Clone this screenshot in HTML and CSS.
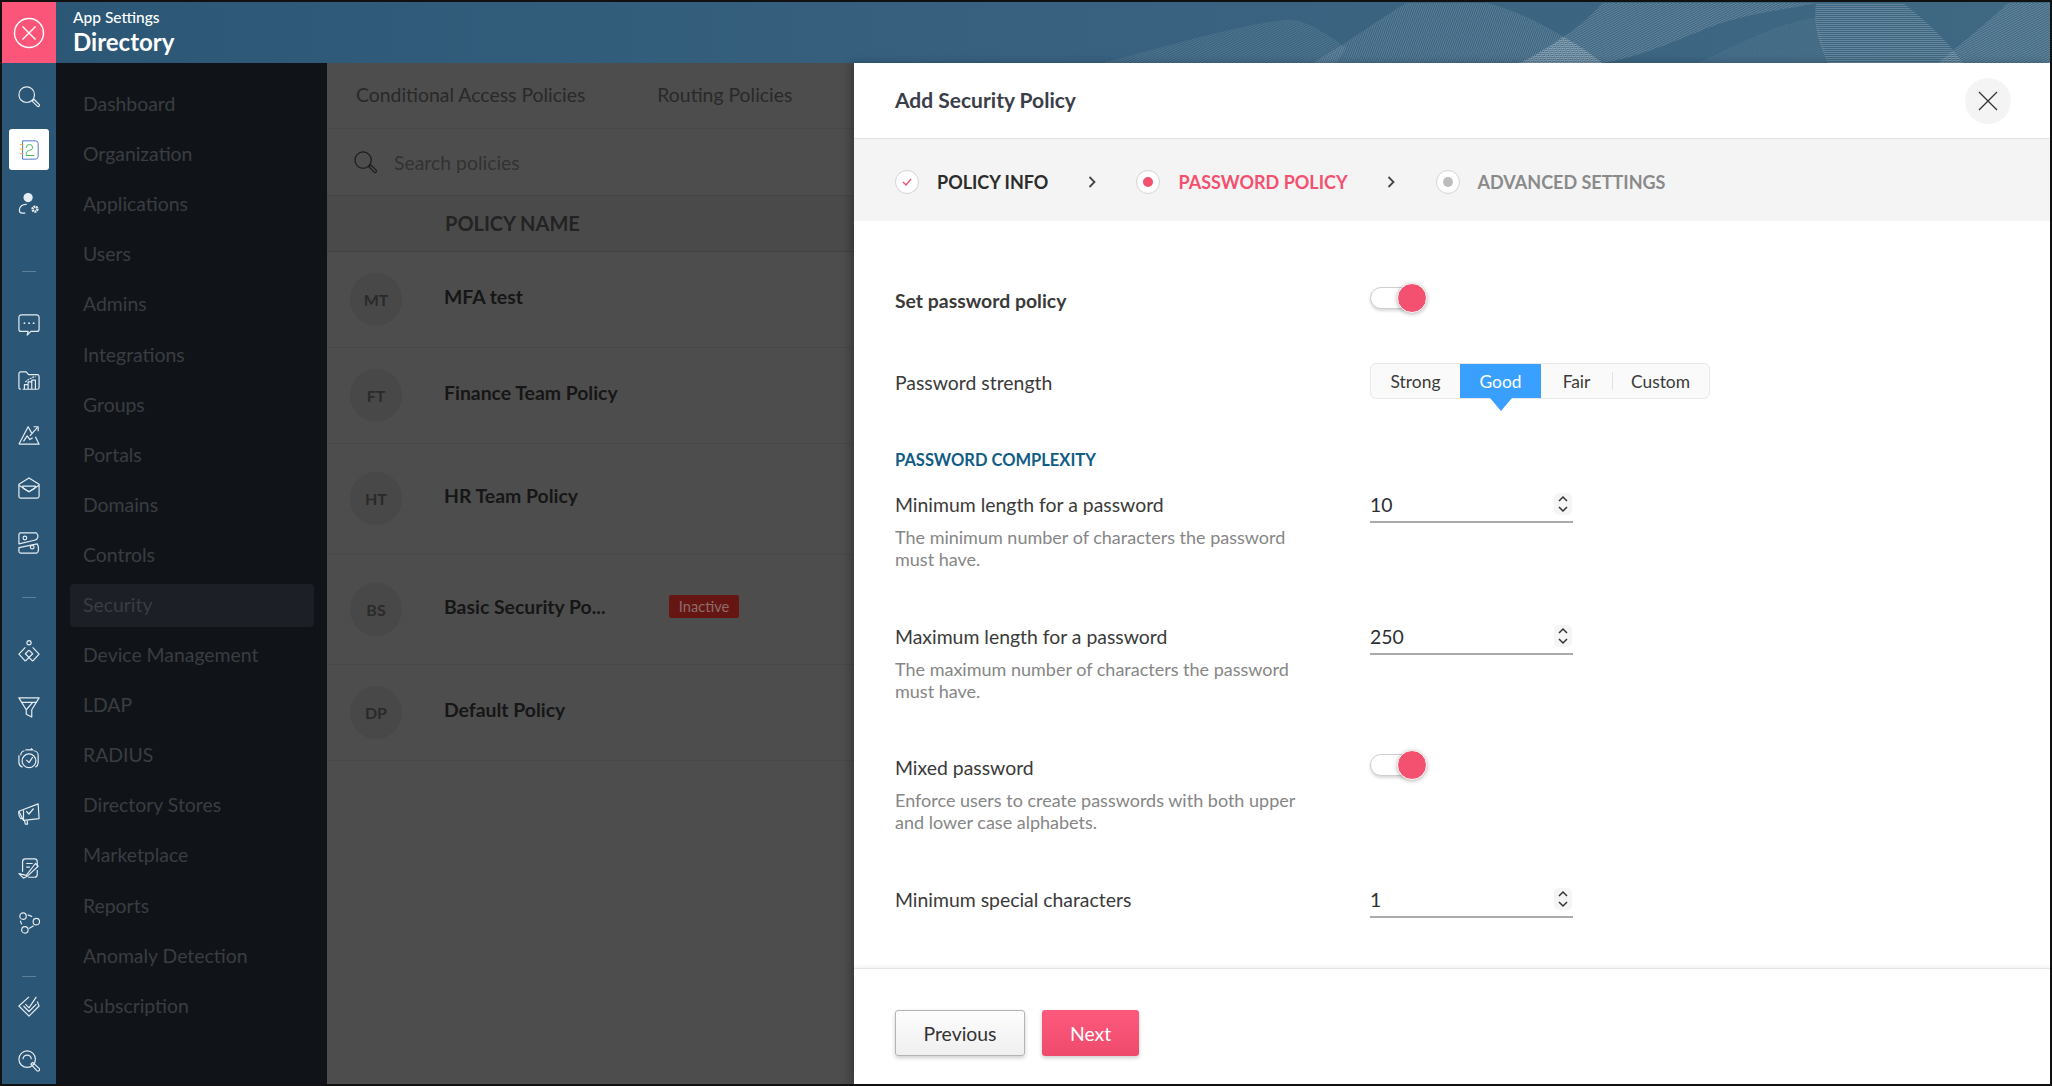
FILE: index.html
```html
<!DOCTYPE html>
<html lang="en">
<head>
    <meta charset="UTF-8">
    <title>Directory - Add Security Policy</title>
    <link rel="stylesheet" href="styles.css">
</head>
<body>
    <header class="topbar">
        <div class="close-tile">
            <svg width="32" height="32" viewBox="0 0 32 32" fill="none" stroke="#fff" stroke-width="1.4"><circle cx="16" cy="16" r="14.5"/><path d="M9.500 9.500l13 13M22.500 9.500l-13 13"/></svg>
        </div>
        <div class="app-title">
            <div class="app-name">App Settings</div>
            <div class="app-section">Directory</div>
        </div>
        <!-- background waves -->
        <svg class="waves" width="1052" height="61" viewBox="0 0 1052 61">
            <defs>
                <pattern id="hatchA" width="2" height="2" patternUnits="userSpaceOnUse" patternTransform="rotate(62)"><rect width="1" height="2" fill="#fff" fill-opacity=".2"/></pattern>
                <pattern id="hatchB" width="2" height="2" patternUnits="userSpaceOnUse" patternTransform="rotate(20)"><rect width="1" height="2" fill="#fff" fill-opacity=".17"/></pattern>
                <pattern id="hatchC" width="2" height="2" patternUnits="userSpaceOnUse" patternTransform="rotate(90)"><rect width="1" height="2" fill="#fff" fill-opacity=".2"/></pattern>
            </defs>
            <path d="M104 61C150 50 230 25 285 18C300 15 320 25 348 46L338 61Z" fill="url(#hatchA)" fill-opacity=".6"/>
            <path d="M315 61C350 40 385 15 408 1L490 1C530 12 570 35 604 61Z" fill="url(#hatchB)"/>
            <path d="M523 61C550 45 585 25 604 1L818 1C790 8 745 10 700 30C670 42 640 55 605 61Z" fill="url(#hatchA)"/>
            <path d="M565 35C580 42 595 52 604 61L520 61C535 55 552 45 565 35Z" fill="url(#hatchC)"/>
            <path d="M818 1L905 1C930 20 950 40 966 62L830 61C820 40 815 20 818 1Z" fill="url(#hatchC)"/>
            <path d="M700 61C745 40 780 20 818 16L830 61Z" fill="url(#hatchA)" fill-opacity=".4"/>
            <path d="M940 61C965 40 990 20 1010 1L1052 1L1052 61Z" fill="url(#hatchA)"/>
        </svg>
    </header>

    <div class="workspace">
        <nav class="rail">
            <a class="rail-icon rail-search"><svg viewBox="0 0 24 24"><circle cx="9.500" cy="9.500" r="8.500"/><path d="M15.500 16.500l2-2 5.500 5.500a1.400 1.400 0 0 1-2 2z"/></svg></a>
            <a class="rail-icon rail-active"><svg viewBox="0 0 24 24"><path d="M5 2h14a3 3 0 0 1 3 3v14a3 3 0 0 1-3 3H5z"/><path class="tick" d="M2 6h4M2 11h4M2 16h4"/><path class="lock" d="M9 9.500a3.500 3.500 0 0 1 7 0c0 3-7 2.500-7 6v2.500h9"/></svg></a>
            <a class="rail-icon rail-people"><svg viewBox="0 0 24 24"><circle cx="11" cy="5" r="4.400" class="solid"/><path d="M9.500 12.500C5 12 1.500 15 1.500 18.500c0 2 1 3.500 3 3.500H8"/><circle cx="18.500" cy="17.500" r="2.600" stroke-width="2.800" stroke-dasharray="1.800 .6"/></svg></a>
            <span class="rail-sep"></span>
            <a class="rail-icon rail-chat"><svg viewBox="0 0 24 24"><path d="M3.500 1h17a2.500 2.500 0 0 1 2.500 2.500v13a2.500 2.500 0 0 1-2.500 2.500H14l-4 4 1-4H3.500A2.500 2.500 0 0 1 1 16.500v-13A2.500 2.500 0 0 1 3.500 1z"/><path d="M7 10h.1M12 10h.1M17 10h.1" stroke-width="2" stroke-linecap="round"/></svg></a>
            <a class="rail-icon rail-folder"><svg viewBox="0 0 24 24"><path d="M3 21a2 2 0 0 1-2-2V4a2 2 0 0 1 2-2h6l2.500 3H21a2 2 0 0 1 2 2v12a2 2 0 0 1-2 2"/><path d="M7 21v-5h4v5M11 21v-8h4v8M15 21v-10h4v10M5 21h16"/><path d="M8 13l4-3 4-2 3-1" stroke-dasharray="2 1"/></svg></a>
            <a class="rail-icon rail-peaks"><svg viewBox="0 0 24 24"><path d="M1 22l10-19 4 7M1 22h22l-4-8"/><path d="M6 19l4-6 3 4 3-2"/><path d="M13 13l8-9M17 3h5v5"/></svg></a>
            <a class="rail-icon rail-mail"><svg viewBox="0 0 24 24"><path d="M1 8L12 1l11 7v13a2 2 0 0 1-2 2H3a2 2 0 0 1-2-2z"/><path d="M1 9l11 7 11-7"/><path d="M5 10h14c0 1-1 3-2 3l-5 3-5-3c-1 0-2-2-2-3z"/></svg></a>
            <a class="rail-icon rail-store"><svg viewBox="0 0 24 24"><path d="M3 1h17c3 3 2 7-2 8L1 13V3a2 2 0 0 1 2-2z"/><path d="M4 23h16c3-1 3-7 1-10L1 17v4a2 2 0 0 0 2 2z"/><circle cx="7.500" cy="6.500" r="2"/><circle cx="15.500" cy="16.500" r="2"/></svg></a>
            <span class="rail-sep rail-sep-b"></span>
            <a class="rail-icon rail-diamond"><svg viewBox="0 0 24 24"><circle cx="12" cy="3" r="2.300"/><path d="M8 8l-7 7.500 7 7.500M8 23l8-8-4-4"/><path d="M16 8l7 7.500-7 7.500M16 23l-8-8 4-4"/></svg></a>
            <a class="rail-icon rail-funnel"><svg viewBox="0 0 24 24"><path d="M1 2h22l-8 13v8l-6-3v-5z"/><path d="M4 7h16M9 15l7-8"/></svg></a>
            <a class="rail-icon rail-clock"><svg viewBox="0 0 24 24"><path d="M8 2h8l-2-1.500M3 8a5 5 0 0 1 4-5M17 3a5 5 0 0 1 5 5v8a6 6 0 0 1-3 5M5 21a6 6 0 0 1-4-5V8"/><circle cx="12" cy="14" r="7.500"/><path d="M9 13l3 3 4-6"/></svg></a>
            <a class="rail-icon rail-horn"><svg viewBox="0 0 24 24"><path d="M1 9l21-8 1 16-17 2z"/><path d="M6 8v11M1 9c-.500 3 0 6 2 8h3M7 19l1 4h2.500l-.500-4"/><path d="M9 9l3 3 5-6"/></svg></a>
            <a class="rail-icon rail-note"><svg viewBox="0 0 24 24"><path d="M5 15V4a3 3 0 0 1 3-3h10a3 3 0 0 1 3 3v4M21 13v5a3 3 0 0 1-3 3h-7"/><path d="M9 6h7M9 10h4"/><path d="M1 17l5 5 4-2 12-11-3-3-10 13z"/></svg></a>
            <a class="rail-icon rail-nodes"><svg viewBox="0 0 24 24"><circle cx="5.500" cy="4.500" r="3.500"/><circle cx="20" cy="10.500" r="3.500"/><circle cx="7.500" cy="19.500" r="3.500"/><path d="M10.500 3l5 2M2.500 9.500l1.500 4M12 18l5-3"/></svg></a>
            <span class="rail-sep rail-sep-c"></span>
            <a class="rail-icon rail-tag"><svg viewBox="0 0 24 24"><path d="M12 2L1 12l11 11 11-11-2-5"/><path d="M6 12l6 6 8-8"/><path d="M8 10l4 4 8-12"/></svg></a>
            <a class="rail-icon rail-find"><svg viewBox="0 0 24 24"><circle cx="10" cy="10" r="9"/><path d="M5.500 10a4.500 4.500 0 0 1 9 0"/><path d="M14 15.500l2-2 7 6.500a1.500 1.500 0 0 1-2.500 2.500z"/></svg></a>
        </nav>

        <aside class="sidebar">
            <a class="side-item">Dashboard</a>
            <a class="side-item">Organization</a>
            <a class="side-item">Applications</a>
            <a class="side-item">Users</a>
            <a class="side-item">Admins</a>
            <a class="side-item">Integrations</a>
            <a class="side-item">Groups</a>
            <a class="side-item">Portals</a>
            <a class="side-item">Domains</a>
            <a class="side-item">Controls</a>
            <a class="side-item side-current">Security</a>
            <a class="side-item">Device Management</a>
            <a class="side-item">LDAP</a>
            <a class="side-item">RADIUS</a>
            <a class="side-item">Directory Stores</a>
            <a class="side-item">Marketplace</a>
            <a class="side-item">Reports</a>
            <a class="side-item">Anomaly Detection</a>
            <a class="side-item">Subscription</a>
        </aside>

        <main class="policies">
            <div class="tabs">
                <span class="tab">Conditional Access Policies</span>
                <span class="tab">Routing Policies</span>
            </div>
            <div class="search-row">
                <svg width="23" height="23" viewBox="0 0 24 24" fill="none" stroke="#1c1c1c" stroke-width="1.300"><circle cx="9.500" cy="9.500" r="8.500"/><path d="M15.500 16.500l2-2 5.500 5.500a1.400 1.400 0 0 1-2 2z"/></svg>
                <span class="search-text">Search policies</span>
            </div>
            <div class="list-head">POLICY NAME</div>
            <div class="policy-row">
                <span class="avatar">MT</span>
                <span class="policy-name">MFA test</span>
            </div>
            <div class="policy-row">
                <span class="avatar">FT</span>
                <span class="policy-name">Finance Team Policy</span>
            </div>
            <div class="policy-row policy-row-tall">
                <span class="avatar">HT</span>
                <span class="policy-name">HR Team Policy</span>
            </div>
            <div class="policy-row policy-row-tall">
                <span class="avatar">BS</span>
                <span class="policy-name">Basic Security Po...</span>
                <span class="badge">Inactive</span>
            </div>
            <div class="policy-row">
                <span class="avatar">DP</span>
                <span class="policy-name">Default Policy</span>
            </div>
        </main>

        <!-- Add policy panel -->
        <section class="panel">
            <div class="panel-head">
                <h2 class="panel-title">Add Security Policy</h2>
                <button class="panel-close">
                    <svg width="22" height="22" viewBox="0 0 22 22" fill="none" stroke="#333" stroke-width="1.300"><path d="M2 2l18 18M20 2L2 20"/></svg>
                </button>
            </div>
            <div class="steps">
                <span class="step-dot step-dot-done"><svg width="10" height="8" viewBox="0 0 10 8" fill="none" stroke="#f2506f" stroke-width="1.300"><path d="M1 4l3 3 5-6"/></svg></span>
                <span class="step-name step-done">POLICY INFO</span>
                <svg class="step-arrow" width="9" height="12" viewBox="0 0 9 12" fill="none" stroke="#444" stroke-width="1.800"><path d="M1.500 1l5 5-5 5"/></svg>
                <span class="step-dot"><i class="step-core step-core-on"></i></span>
                <span class="step-name step-on">PASSWORD POLICY</span>
                <svg class="step-arrow" width="9" height="12" viewBox="0 0 9 12" fill="none" stroke="#444" stroke-width="1.800"><path d="M1.500 1l5 5-5 5"/></svg>
                <span class="step-dot"><i class="step-core"></i></span>
                <span class="step-name step-off">ADVANCED SETTINGS</span>
            </div>

            <div class="panel-body">
                <div class="form-row form-row-first">
                    <div class="field-label field-strong field-shift">Set password policy</div>
                    <span class="toggle"><i class="knob"></i></span>
                </div>
                <div class="form-row form-row-strength">
                    <div class="field-label field-shift-b">Password strength</div>
                    <div class="segments">
                        <span class="seg seg-strong">Strong</span>
                        <span class="seg seg-good">Good</span>
                        <span class="seg seg-fair">Fair</span>
                        <span class="seg seg-custom">Custom</span>
                    </div>
                </div>
                <h3 class="group-title">PASSWORD COMPLEXITY</h3>
                <div class="form-row form-row-complex">
                    <div>
                        <div class="field-label">Minimum length for a password</div>
                        <p class="field-desc">The minimum number of characters the password must have.</p>
                    </div>
                    <div class="number-field">
                        <span>10</span>
                        <span class="spin"><svg width="12" height="20" viewBox="0 0 12 20" fill="none" stroke="#333" stroke-width="1.500"><path d="M2 7l4-4 4 4M2 13l4 4 4-4"/></svg></span>
                    </div>
                </div>
                <div class="form-row">
                    <div>
                        <div class="field-label">Maximum length for a password</div>
                        <p class="field-desc">The maximum number of characters the password must have.</p>
                    </div>
                    <div class="number-field">
                        <span>250</span>
                        <span class="spin"><svg width="12" height="20" viewBox="0 0 12 20" fill="none" stroke="#333" stroke-width="1.500"><path d="M2 7l4-4 4 4M2 13l4 4 4-4"/></svg></span>
                    </div>
                </div>
                <div class="form-row form-row-mixed">
                    <div>
                        <div class="field-label">Mixed password</div>
                        <p class="field-desc">Enforce users to create passwords with both upper and lower case alphabets.</p>
                    </div>
                    <span class="toggle toggle-up"><i class="knob"></i></span>
                </div>
                <div class="form-row">
                    <div class="field-label">Minimum special characters</div>
                    <div class="number-field">
                        <span>1</span>
                        <span class="spin"><svg width="12" height="20" viewBox="0 0 12 20" fill="none" stroke="#333" stroke-width="1.500"><path d="M2 7l4-4 4 4M2 13l4 4 4-4"/></svg></span>
                    </div>
                </div>
            </div>

            <div class="panel-foot">
                <button class="btn btn-prev">Previous</button>
                <button class="btn btn-next">Next</button>
            </div>
        </section>
    </div>
</body>
</html>
```

FILE: styles.css
```css
* {
    box-sizing: border-box;
}

html, body {
    height: 100%;
}

body {
    margin: 0;
    width: 2052px;
    height: 1086px;
    overflow: hidden;
    display: flex;
    flex-direction: column;
    border: 2px solid #111;
    font-family: Lato, "Open Sans", sans-serif;
    font-size: 19.400px;
    color: #333;
    background: #111;
}

/* Top bar */
.topbar {
    position: relative;
    height: 61px;
    flex: none;
    display: flex;
    background: linear-gradient(90deg, #2b5675 0%, #36607e 45%, #3f6883 100%);
    color: #fff;
    overflow: hidden;
}

.close-tile {
    width: 54px;
    display: flex;
    align-items: center;
    justify-content: center;
    background: #fb5679;
}

.app-title {
    padding: 5px 0 0 17px;
}

.app-name {
    font-size: 15.500px;
    line-height: 20px;
    font-weight: 500;
}

.app-section {
    font-size: 24px;
    line-height: 30px;
    font-weight: 700;
}

.waves {
    position: absolute;
    right: 0;
    top: 0;
}

.workspace {
    position: relative;
    flex: 1;
    display: flex;
    min-height: 0;
}

/* Icon rail */
.rail {
    width: 54px;
    flex: none;
    display: flex;
    flex-direction: column;
    align-items: center;
    background: #2b5675;
}

.rail-icon {
    width: 22px;
    height: 22px;
    flex: none;
}

.rail-icon svg {
    display: block;
    width: 22px;
    height: 22px;
    fill: none;
    stroke: #e6edf2;
    stroke-width: 1.300;
    stroke-linejoin: round;
}

.rail-icon .solid {
    fill: #e6edf2;
}

.rail-search { margin-top: 23px; }

.rail-active {
    width: 40px;
    height: 41px;
    margin-top: 21px;
    display: flex;
    align-items: center;
    justify-content: center;
    background: #fff;
    border-radius: 3px;
}

.rail-active svg {
    stroke: #3d6fc2;
    stroke-width: 1;
}

.rail-active .tick {
    stroke: #e9a83c;
}

.rail-active .lock {
    stroke: #35a853;
}

.rail-people { margin-top: 23px; }

.rail-sep {
    width: 14px;
    height: 1px;
    flex: none;
    margin-top: 56px;
    background: #5d7f97;
}

.rail-chat { margin-top: 42px; }
.rail-folder { margin-top: 34px; }
.rail-peaks { margin-top: 32px; }
.rail-mail { margin-top: 31px; }
.rail-store { margin-top: 33px; }

.rail-sep-b { margin-top: 43px; }

.rail-diamond { margin-top: 42px; }
.rail-funnel { margin-top: 34px; }
.rail-clock { margin-top: 30px; }
.rail-horn { margin-top: 33px; }
.rail-note { margin-top: 33px; }
.rail-nodes { margin-top: 32px; }

.rail-sep-c { margin-top: 42px; }

.rail-tag { margin-top: 18px; }
.rail-find { margin-top: 33px; }

/* Sidebar */
.sidebar {
    width: 271px;
    flex: none;
    padding-top: 15.500px;
    background: #101418;
    display: flex;
    flex-direction: column;
    align-items: stretch;
}

.side-item {
    height: 50.100px;
    flex: none;
    display: flex;
    align-items: center;
    margin: 0 13px 0 14px;
    padding-left: 13px;
    color: #3a3d42;
    border-radius: 4px;
}

.side-current {
    height: 43px;
    margin-top: 5px;
    margin-bottom: 2.100px;
    padding-bottom: 2px;
    background: #1c1f26;
}

/* Policies list, dimmed behind the panel */
.policies {
    flex: 1;
    background: #4d4d4d;
    color: #1c1c1c;
}

.tabs {
    height: 66px;
    display: flex;
    align-items: center;
    padding: 0 0 2px 29px;
    gap: 72px;
    color: #292929;
    border-bottom: 1px solid #484848;
}

.search-row {
    height: 67px;
    display: flex;
    align-items: center;
    gap: 17px;
    padding-left: 27px;
    border-bottom: 1px solid #454545;
}

.search-text {
    color: #323232;
}

.list-head {
    height: 56px;
    display: flex;
    align-items: center;
    padding: 0 0 2px 118px;
    font-size: 20px;
    font-weight: 700;
    color: #232323;
    background: #4a4a4a;
    border-bottom: 1px solid #434343;
}

.policy-row {
    height: 96px;
    display: flex;
    align-items: center;
    padding-left: 23px;
    border-bottom: 1px solid #484848;
}

.policy-row-tall {
    height: 110.500px;
}

.avatar {
    width: 52px;
    height: 53px;
    flex: none;
    display: flex;
    align-items: center;
    justify-content: center;
    margin-right: 42px;
    border-radius: 50%;
    background: #484848;
    color: #2a2a2a;
    font-size: 16px;
    font-weight: 700;
}

.policy-name {
    width: 229px;
    flex: none;
    margin-top: -6px;
    font-weight: 700;
    color: #161616;
}

.badge {
    width: 70px;
    height: 23px;
    margin: -6px 0 0 -4px;
    display: flex;
    align-items: center;
    justify-content: center;
    background: #651613;
    color: #8d6d6a;
    font-size: 14.600px;
    border-radius: 2px;
}

/* Panel */
.panel {
    position: absolute;
    top: 0;
    right: 0;
    bottom: 0;
    width: 1196px;
    display: flex;
    flex-direction: column;
    background: #fff;
    box-shadow: -4px 0 8px rgba(0, 0, 0, 0.25);
}

.panel-head {
    height: 75px;
    flex: none;
    display: flex;
    align-items: center;
    justify-content: space-between;
    padding: 0 39px 2px 41px;
}

.panel-title {
    margin: 0;
    font-size: 21px;
    font-weight: 700;
    color: #3a3e4a;
}

.panel-close {
    width: 46px;
    height: 46px;
    display: flex;
    align-items: center;
    justify-content: center;
    margin-top: 2px;
    border: none;
    border-radius: 50%;
    background: #f4f4f4;
}

.steps {
    height: 83px;
    flex: none;
    display: flex;
    align-items: center;
    padding: 4px 0 0 41px;
    background: #f4f4f4;
    border-top: 1px solid #e2e2e2;
}

.step-dot {
    width: 24px;
    height: 24px;
    flex: none;
    display: flex;
    align-items: center;
    justify-content: center;
    border: 1px solid #d4d4d4;
    border-radius: 50%;
    background: #fff;
}

.step-core {
    width: 10px;
    height: 10px;
    border-radius: 50%;
    background: #bdbdbd;
}

.step-core-on {
    background: #f4506f;
}

.step-name {
    margin-left: 18px;
    font-size: 18px;
    font-weight: 700;
    line-height: 24px;
}

.step-done { color: #2c2c2c; }
.step-on { color: #f4506f; }
.step-off { color: #8a8a8a; }

.step-arrow {
    flex: none;
    margin: 0 39.500px;
}

.panel-body {
    flex: 1;
    min-height: 0;
    padding: 62px 0 0 41px;
    overflow: hidden;
}

.form-row {
    display: grid;
    grid-template-columns: 475px 1fr;
    align-items: start;
    margin-top: 55px;
    min-height: 30px;
}

.form-row-first {
    margin-top: 0;
}

.form-row-strength {
    margin-top: 50px;
}

.form-row-complex {
    margin-top: 23px;
}

.form-row-mixed {
    margin-top: 54px;
}

.field-label {
    line-height: 24px;
    color: #3a3a3a;
}

.field-strong {
    font-weight: 700;
}

.field-shift {
    margin-top: 6px;
}

.field-shift-b {
    margin-top: 8px;
}

.field-desc {
    width: 410px;
    margin: 9px 0 0;
    font-size: 18px;
    line-height: 22px;
    color: #868686;
}

.toggle {
    position: relative;
    display: block;
    width: 46px;
    height: 22px;
    margin-top: 4px;
    border: 1px solid #cfcfcf;
    border-radius: 11px;
    background: #fff;
    box-shadow: 0 2px 3px rgba(0, 0, 0, 0.15);
}

.toggle-up {
    margin-top: -2px;
}

.knob {
    position: absolute;
    left: 26px;
    top: -5px;
    width: 30px;
    height: 30px;
    border-radius: 50%;
    background: #f4506f;
    box-shadow: 0 1px 4px rgba(0, 0, 0, 0.3);
    border: 1px solid #fff;
}

.segments {
    position: relative;
    display: flex;
    width: 340px;
    height: 36px;
    border: 1px solid #e8e8e8;
    border-radius: 6px;
    background: #fafafa;
    font-size: 17.400px;
    color: #3a3a3a;
}

.seg {
    display: flex;
    align-items: center;
    justify-content: center;
}

.seg-strong { width: 89px; }

.seg-good {
    position: relative;
    width: 81px;
    background: #3aa0ff;
    color: #fff;
}

.seg-good::after {
    content: "";
    position: absolute;
    left: 30px;
    top: 100%;
    border: solid transparent;
    border-width: 13px 11px 0;
    border-top-color: #3aa0ff;
}

.seg-fair { width: 71px; }

.seg-custom {
    flex: 1;
    position: relative;
}

.seg-custom::before {
    content: "";
    position: absolute;
    left: 0;
    top: 8px;
    bottom: 8px;
    width: 1px;
    background: #e2e2e2;
}

.group-title {
    margin: 51px 0 23px;
    font-size: 16.500px;
    line-height: 20px;
    font-weight: 700;
    color: #0f5c86;
}

.group-title + .form-row {
    margin-top: 0;
}

.number-field {
    width: 203px;
    height: 30px;
    display: flex;
    align-items: center;
    justify-content: space-between;
    padding: 0 1px 6px 0;
    border-bottom: 2px solid #aaa;
    color: #2e2e2e;
}

.spin {
    width: 18px;
    height: 22px;
    display: flex;
    align-items: center;
    justify-content: center;
    background: #f5f5f5;
    border-radius: 5px;
}

.panel-foot {
    height: 116px;
    flex: none;
    display: flex;
    align-items: flex-start;
    gap: 17px;
    padding: 41px 0 0 41px;
    border-top: 1px solid #e4e4e4;
    box-shadow: 0 -2px 3px rgba(0, 0, 0, 0.05);
}

.btn {
    height: 46px;
    border-radius: 3px;
    font-family: inherit;
    font-size: 19.400px;
    box-shadow: 0 2px 4px rgba(0, 0, 0, 0.2);
}

.btn-prev {
    width: 130px;
    border: 1px solid #b4b4b4;
    background: linear-gradient(#fdfdfd, #efefef);
    color: #333;
}

.btn-next {
    width: 97px;
    border: none;
    background: linear-gradient(#fc5a7d, #ee4a6c);
    color: #fff;
}
```
